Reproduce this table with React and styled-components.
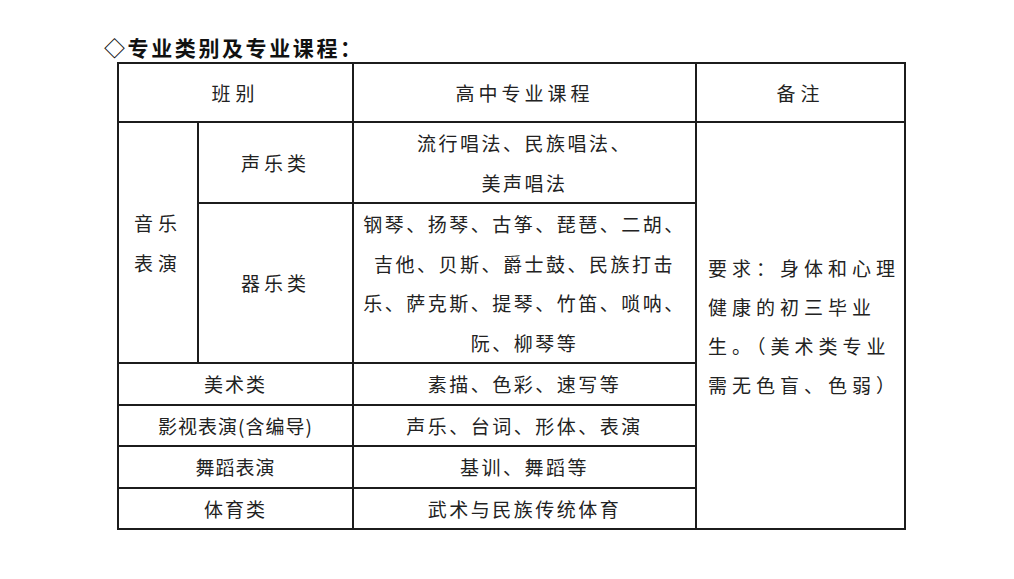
import React from 'react';
import styled, { createGlobalStyle } from 'styled-components';

const GlobalStyle = createGlobalStyle`
html, body {
  margin:0;
  padding:0;
  background:#fff;
}
body {
  font-family:"Noto Sans CJK SC", "Noto Sans CJK TC", sans-serif;
  color:#222;
}
`;

const Page = styled.div`
padding:34px 0 0 104px;
`;

const Title = styled.h2`
margin:0 0 2px 0;
font-size:21px;
font-weight:700;
line-height:26px;
letter-spacing:2.6px;
color:#111;
`;

const Table = styled.table`
margin-left:13px;
width:787px;
table-layout:fixed;
border-collapse:collapse;
`;

const Row = styled.tr`
height:${p => p.h}px;
`;

const Cell = styled.td`
border:2px solid #1c1c1c;
padding:0;
text-align:${p => (p.left ? 'left' : 'center')};
vertical-align:middle;
font-size:19px;
line-height:${p => p.lh || 39.5}px;
letter-spacing:${p => p.ls || 2.5}px;
font-weight:400;
`;

const Note = styled.div`
padding-left:11px;
letter-spacing:5px;
line-height:39px;
font-size:19px;
`;

const Line = styled.div`
white-space:nowrap;
`;

const lines = arr => arr.map(t => <Line key={t}>{t}</Line>);

const App = () => {
  return <Page>
    <GlobalStyle/>
    <Title>◇专业类别及专业课程：</Title>
    <Table>
      <colgroup>
        <col style={{width:80}}/>
        <col style={{width:155}}/>
        <col style={{width:343}}/>
        <col style={{width:209}}/>
      </colgroup>
      <tbody>
        <Row h={59}>
          <Cell colSpan={2} ls={5}>班别</Cell>
          <Cell ls={4}>高中专业课程</Cell>
          <Cell ls={5}>备注</Cell>
        </Row>
        <Row h={81}>
          <Cell rowSpan={2} ls={5}>{lines(['音乐', '表演'])}</Cell>
          <Cell ls={4}>声乐类</Cell>
          <Cell>{lines(['流行唱法、民族唱法、', '美声唱法'])}</Cell>
          <Cell rowSpan={6} left>
            <Note>
              {lines(['要求：身体和心理', '健康的初三毕业', '生。（美术类专业', '需无色盲、色弱）'])}
            </Note>
          </Cell>
        </Row>
        <Row h={158}>
          <Cell ls={4}>器乐类</Cell>
          <Cell>{lines([
            '钢琴、扬琴、古筝、琵琶、二胡、',
            '吉他、贝斯、爵士鼓、民族打击',
            '乐、萨克斯、提琴、竹笛、唢呐、',
            '阮、柳琴等'
          ])}</Cell>
        </Row>
        <Row h={40}>
          <Cell colSpan={2} ls={2}>美术类</Cell>
          <Cell>素描、色彩、速写等</Cell>
        </Row>
        <Row h={41}>
          <Cell colSpan={2} ls={1}>影视表演(含编导)</Cell>
          <Cell>声乐、台词、形体、表演</Cell>
        </Row>
        <Row h={41}>
          <Cell colSpan={2} ls={1}>舞蹈表演</Cell>
          <Cell>基训、舞蹈等</Cell>
        </Row>
        <Row h={39}>
          <Cell colSpan={2} ls={2}>体育类</Cell>
          <Cell>武术与民族传统体育</Cell>
        </Row>
      </tbody>
    </Table>
  </Page>
}

export default App
